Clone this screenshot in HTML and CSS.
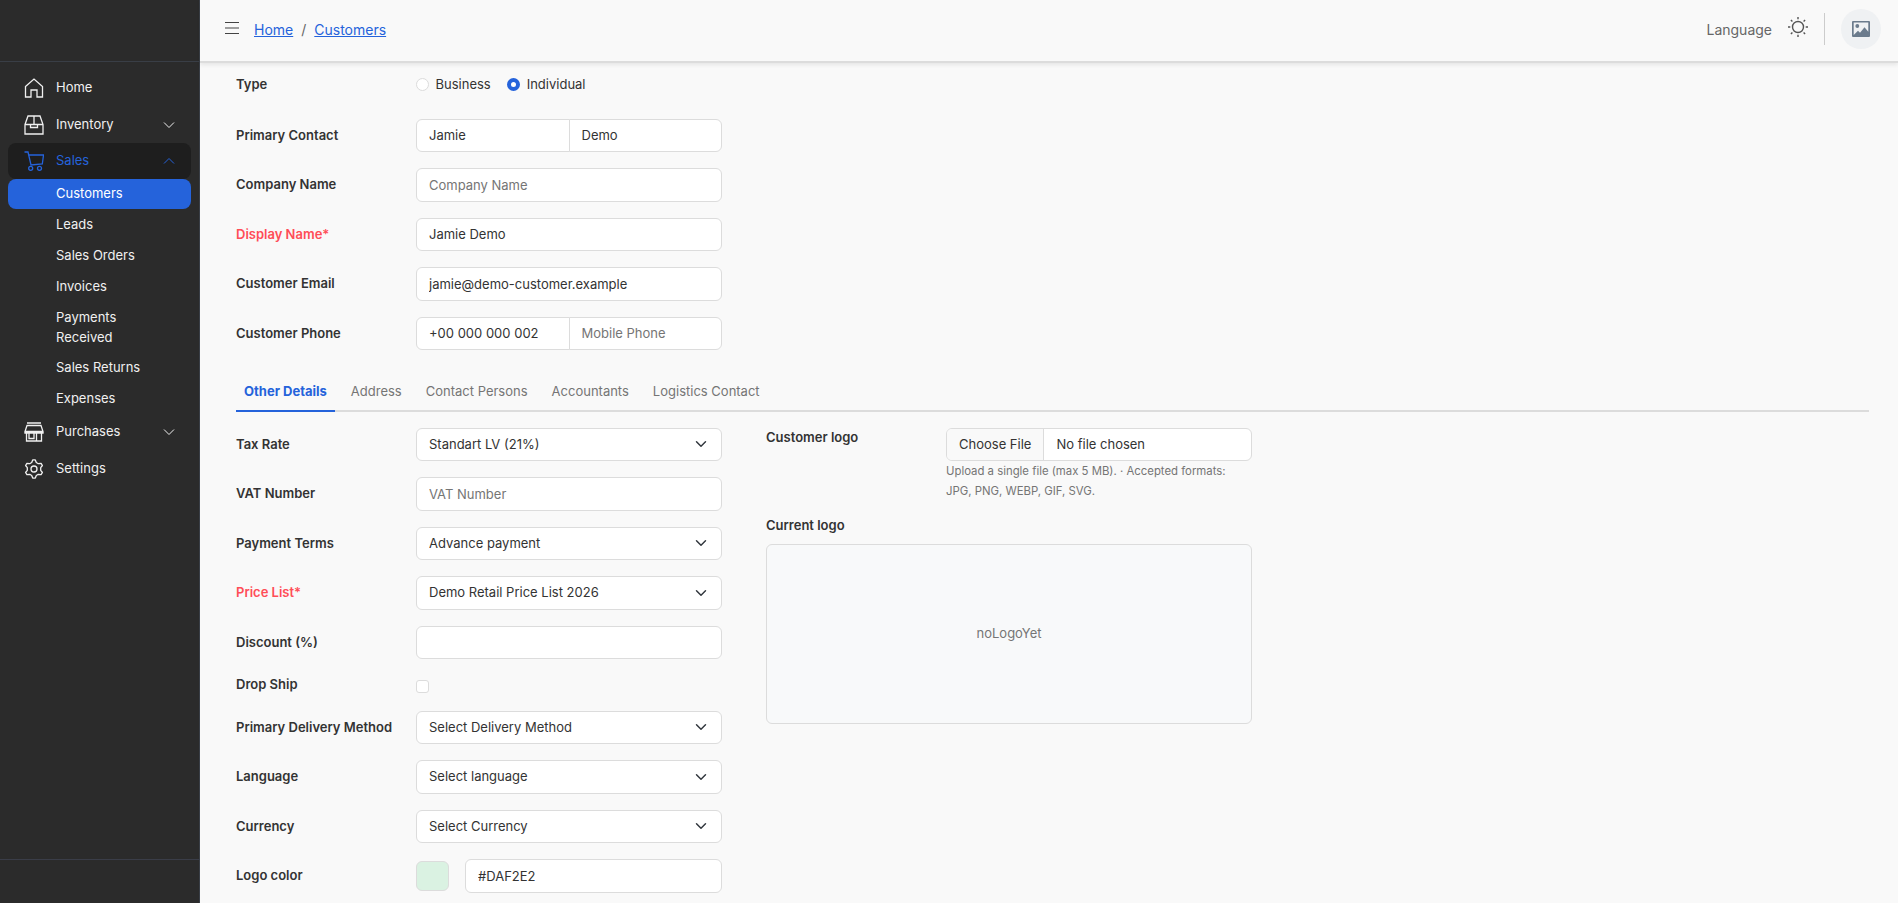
FILE: index.html
```
<!DOCTYPE html>
<html lang="en">
<head>
    <meta charset="UTF-8">
    <meta name="viewport" content="width=device-width, initial-scale=1.0">
    <title>Customers</title>
    <link rel="stylesheet" href="styles.css">
</head>
<body>

<aside class="sidebar">
    <div class="sidebar-brand"></div>
    <nav class="menu">
        <a class="menu-item">
            <svg class="icon" viewBox="0 0 20 20"><path d="M1.500 8.500 10 1l8.500 7.500V19H13v-7H7v7H1.500z"/></svg>
            <span>Home</span>
        </a>
        <a class="menu-item">
            <svg class="icon" viewBox="0 0 20 20"><path d="M1 9.500 4 1h12l3 8.500V19H1zM1 9.500h18M6.500 9.500v3h7v-3M10 1v8.500"/></svg>
            <span>Inventory</span>
            <svg class="arrow" viewBox="0 0 12 12"><path d="M1 3.500 6 8.500l5-5"/></svg>
        </a>
        <a class="menu-item open">
            <svg class="icon" viewBox="0 0 20 20"><path d="M.5 1h3.500l3 13 11.300-1 1.200-9H5"/><circle cx="6.700" cy="17.300" r="2"/><circle cx="15.500" cy="17.300" r="2"/></svg>
            <span>Sales</span>
            <svg class="arrow" viewBox="0 0 12 12"><path d="m1 8.500 5-5 5 5"/></svg>
        </a>
        <a class="menu-sub active">Customers</a>
        <a class="menu-sub">Leads</a>
        <a class="menu-sub">Sales Orders</a>
        <a class="menu-sub">Invoices</a>
        <a class="menu-sub two-lines">Payments Received</a>
        <a class="menu-sub">Sales Returns</a>
        <a class="menu-sub">Expenses</a>
        <a class="menu-item">
            <svg class="icon" viewBox="0 0 20 20"><path d="M3 1h14M3 3.500h14l2 6H1zM1 9.500v1.500h18V9.500M2.500 11v8h15v-8M5 11v5.500h5V11M12.500 19v-8"/></svg>
            <span>Purchases</span>
            <svg class="arrow" viewBox="0 0 12 12"><path d="M1 3.500 6 8.500l5-5"/></svg>
        </a>
        <a class="menu-item">
            <svg class="icon" viewBox="0 0 20 20"><path stroke-linejoin="round" d="M8.700.9h2.600l1 2.600 2 1.200 2.800-.4 1.300 2.200L16.700 8.700v2.600l1.700 2.200-1.300 2.200-2.800-.4-2 1.200-1 2.600H8.700l-1-2.600-2-1.200-2.800.4-1.300-2.200 1.700-2.200V8.700L1.600 6.500l1.300-2.200 2.800.4 2-1.200z"/><circle cx="10" cy="10" r="3"/></svg>
            <span>Settings</span>
        </a>
    </nav>
    <div class="sidebar-footer"></div>
</aside>

<div class="page">
    <header class="topbar">
        <svg class="burger" viewBox="0 0 14 14"><path d="M0 1.500h14M0 7h14M0 12.500h14"/></svg>
        <div class="breadcrumb">
            <a href="#">Home</a><span>/</span><a href="#">Customers</a>
        </div>
        <div class="topbar-right">
            <span class="lang">Language</span>
            <svg class="sun" viewBox="0 0 20 20"><circle cx="10" cy="10" r="5.500"/><path d="M10 0v2.300M10 17.700V20M0 10h2.300M17.700 10H20M2.900 2.900l1.500 1.500M15.600 15.600l1.500 1.500M2.900 17.100l1.500-1.500M15.600 4.400l1.500-1.500"/></svg>
            <div class="divider"></div>
            <div class="avatar">
                <svg viewBox="0 0 18 16"><path fill-rule="evenodd" d="M1 0h16a1 1 0 0 1 1 1v14a1 1 0 0 1-1 1H1a1 1 0 0 1-1-1V1a1 1 0 0 1 1-1zm.7 1.600V14L6 9.700l2 2 4.500-5.500 3.800 4.500V1.600z"/><circle cx="5.300" cy="5" r="1.900"/></svg>
            </div>
        </div>
    </header>

    <main class="content">
        <form class="customer-form">
            <div class="row row-type">
                <label>Type</label>
                <div class="radios">
                    <input type="radio" name="type" id="business"><label for="business">Business</label>
                    <input type="radio" name="type" id="individual" checked><label for="individual">Individual</label>
                </div>
            </div>
            <div class="row">
                <label>Primary Contact</label>
                <div class="group"><input type="text" class="input" value="Jamie"><input type="text" class="input" value="Demo"></div>
            </div>
            <div class="row">
                <label>Company Name</label>
                <input type="text" class="input" placeholder="Company Name">
            </div>
            <div class="row">
                <label class="required">Display Name*</label>
                <input type="text" class="input" value="Jamie Demo">
            </div>
            <div class="row">
                <label>Customer Email</label>
                <input type="text" class="input" value="jamie@demo-customer.example">
            </div>
            <div class="row">
                <label>Customer Phone</label>
                <div class="group"><input type="text" class="input" value="+00 000 000 002"><input type="text" class="input" placeholder="Mobile Phone"></div>
            </div>

            <div class="tabs">
                <a class="tab active">Other Details</a>
                <a class="tab">Address</a>
                <a class="tab">Contact Persons</a>
                <a class="tab">Accountants</a>
                <a class="tab">Logistics Contact</a>
            </div>

            <div class="columns">
                <div class="details">
                    <div class="row">
                        <label>Tax Rate</label>
                        <select class="input"><option>Standart LV (21%)</option></select>
                    </div>
                    <div class="row">
                        <label>VAT Number</label>
                        <input type="text" class="input" placeholder="VAT Number">
                    </div>
                    <div class="row">
                        <label>Payment Terms</label>
                        <select class="input"><option>Advance payment</option></select>
                    </div>
                    <div class="row">
                        <label class="required">Price List*</label>
                        <select class="input"><option>Demo Retail Price List 2026</option></select>
                    </div>
                    <div class="row">
                        <label>Discount (%)</label>
                        <input type="text" class="input">
                    </div>
                    <div class="row row-check">
                        <label>Drop Ship</label>
                        <input type="checkbox">
                    </div>
                    <div class="row">
                        <label>Primary Delivery Method</label>
                        <select class="input"><option>Select Delivery Method</option></select>
                    </div>
                    <div class="row">
                        <label>Language</label>
                        <select class="input"><option>Select language</option></select>
                    </div>
                    <div class="row">
                        <label>Currency</label>
                        <select class="input"><option>Select Currency</option></select>
                    </div>
                    <div class="row">
                        <label>Logo color</label>
                        <div class="color-field"><span class="swatch"></span><input type="text" class="input" value="#DAF2E2"></div>
                    </div>
                </div>

                <div class="logo-panel">
                    <div class="row row-file">
                        <label>Customer logo</label>
                        <div>
                            <div class="input file"><span class="file-button">Choose File</span><span class="file-name">No file chosen</span></div>
                            <div class="help">Upload a single file (max 5 MB). · Accepted formats: JPG, PNG, WEBP, GIF, SVG.</div>
                        </div>
                    </div>
                    <label class="current-label">Current logo</label>
                    <div class="preview">noLogoYet</div>
                </div>
            </div>
        </form>
    </main>
</div>

</body>
</html>
```

FILE: styles.css
```
* {
    box-sizing: border-box;
}
body {
    display: flex;
    height: 100vh;
    margin: 0;
    overflow: hidden;
    font-family: Inter, sans-serif;
    font-size: 13px;
    line-height: 19.5px;
    color: #333;
    background-color: #f9f9f9;
}
svg {
    fill: none;
    stroke: currentColor;
}

/* sidebar */
.sidebar {
    display: flex;
    flex-direction: column;
    width: 200px;
    flex-shrink: 0;
    background-color: #2b2b2b;
    border-right: 1px solid #393e46;
    color: #f0f0f0;
}
.sidebar-brand {
    height: 62px;
    border-bottom: 1px solid #393e46;
}
.sidebar-footer {
    height: 44px;
    border-top: 1px solid #3a3d48;
}
.menu {
    display: flex;
    flex: 1;
    flex-direction: column;
    gap: 1px;
    padding: 8px 8px;
}
.menu-item {
    display: flex;
    align-items: center;
    height: 36px;
    padding: 0 16px;
    border-radius: 8px;
}
.menu-item span {
    flex: 1;
    margin-left: 12px;
}
.menu-item.open {
    margin: -1px 0;
    color: #2563db;
    background-color: #1e1e1e;
}
.icon {
    width: 20px;
    height: 20px;
    stroke-width: 1.3;
}
.arrow {
    width: 12px;
    height: 12px;
    stroke-width: 1;
}
.menu-sub {
    padding: 4px 48px 6px;
    border-radius: 8px;
    line-height: 20px;
}
.menu-sub.active {
    color: #fff;
    background-color: #2563db;
}
.menu-sub.two-lines {
    padding-bottom: 5px;
}
.menu-sub + .menu-item {
    margin-top: -1px;
}

/* top bar */
.page {
    flex: 1;
    min-width: 0;
}
.topbar {
    display: flex;
    align-items: center;
    height: 63px;
    padding: 0 17px 3px 25px;
    border-bottom: 2px solid #dcdcdc;
    box-shadow: 0 2px 4px rgba(0, 0, 0, 0.08);
    font-size: 14px;
    color: #666;
}
.burger {
    width: 14px;
    height: 14px;
    margin-bottom: 2px;
    stroke-width: 1.2;
    color: #444;
}
.breadcrumb {
    display: flex;
    gap: 8px;
    margin-left: 15px;
    padding-top: 2px;
}
.breadcrumb a {
    color: #2563db;
}
.topbar-right {
    display: flex;
    align-items: center;
    margin-left: auto;
}
.lang {
    padding-top: 2px;
}
.sun {
    width: 20px;
    height: 20px;
    margin: 0 16px 4px;
    stroke-width: 1.4;
    color: #555;
}
.divider {
    width: 1px;
    height: 32px;
    margin-right: 16px;
    background-color: #ccc;
}
.avatar {
    display: flex;
    align-items: center;
    justify-content: center;
    width: 40px;
    height: 40px;
    border-radius: 50%;
    background-color: #eff1f3;
}
.avatar svg {
    width: 18px;
    height: 16px;
    fill: #6b7b8c;
    stroke: none;
}

/* form */
.content {
    padding: 12px 29px 0 36px;
}
.row {
    display: grid;
    grid-template-columns: 180px 306px;
    align-items: center;
    margin-bottom: 16px;
}
label {
    font-weight: 600;
}
.required {
    color: #ff4d57;
}
.input {
    width: 100%;
    height: 33.5px;
    padding: 0 12px;
    border: 1px solid #dcdcdc;
    border-radius: 6px;
    background-color: #fff;
    font: inherit;
    color: #333;
    outline: none;
}
.input::placeholder {
    color: #757575;
}
select.input {
    appearance: none;
    background: #fff url("data:image/svg+xml,%3Csvg xmlns='http://www.w3.org/2000/svg' viewBox='0 0 16 16'%3E%3Cpath fill='none' stroke='%23343a40' stroke-linecap='round' stroke-linejoin='round' stroke-width='2' d='m2 5 6 6 6-6'/%3E%3C/svg%3E") no-repeat right 14px center / 12px;
}
.group {
    display: flex;
}
.group .input:first-child {
    border-radius: 6px 0 0 6px;
}
.group .input:last-child {
    margin-left: -1px;
    border-radius: 0 6px 6px 0;
}
.row-type {
    margin-bottom: 24px;
}
.radios {
    display: flex;
    align-items: center;
}
.radios label {
    margin: 0 16.5px 0 6.5px;
    font-weight: 400;
}
input[type="radio"], input[type="checkbox"] {
    appearance: none;
    width: 13px;
    height: 13px;
    margin: 0;
    border: 1px solid #dcdcdc;
    border-radius: 50%;
    background-color: #fff;
}
input[type="radio"]:checked {
    border: 4px solid #2563db;
}
input[type="checkbox"] {
    margin-top: 3px;
    border-radius: 3px;
}
.tabs {
    display: flex;
    gap: 8px;
    margin-top: 24px;
    border-bottom: 2px solid #dcdcdc;
}
.tab {
    margin-bottom: -2px;
    padding: 8px;
    border-bottom: 2px solid transparent;
    color: #757575;
}
.tab.active {
    border-color: #2563db;
    color: #2563db;
    font-weight: 700;
}
.columns {
    display: flex;
    gap: 44px;
    margin-top: 16px;
}
.row-file {
    align-items: start;
}
.file {
    display: flex;
    align-items: center;
    padding: 0;
    overflow: hidden;
}
.file-button {
    padding: 6px 12px;
    border-right: 1px solid #dcdcdc;
    background-color: #f9f9f9;
}
.file-name {
    padding-left: 12px;
}
.help {
    padding-top: 1px;
    font-size: 11.375px;
    line-height: 19.5px;
    color: #757575;
}
.current-label {
    display: block;
    margin: -1px 0 8px;
}
.preview {
    display: flex;
    align-items: center;
    justify-content: center;
    height: 180px;
    border: 1px solid #dcdcdc;
    border-radius: 6px;
    background-color: #f8f9fa;
    color: #757575;
}
.color-field {
    display: flex;
    align-items: center;
    gap: 16px;
}
.swatch {
    width: 33px;
    height: 30px;
    flex-shrink: 0;
    border: 1px solid #dcdcdc;
    border-radius: 6px;
    background-color: #daf2e2;
}
```
